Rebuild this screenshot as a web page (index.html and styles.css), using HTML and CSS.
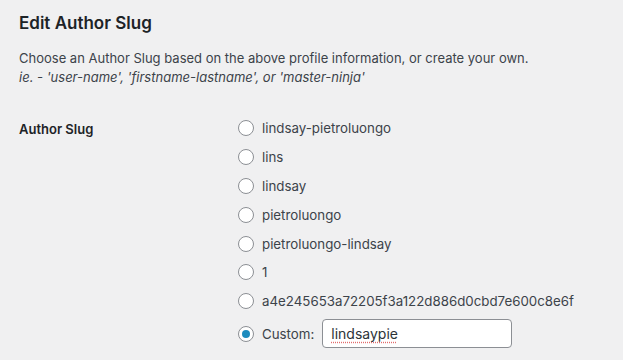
FILE: index.html
```html
<!DOCTYPE html>
<html lang="en">
<head>
<meta charset="utf-8">
<title>Edit Author Slug</title>
<link rel="stylesheet" href="styles.css">
</head>
<body>
<h2 class="title">Edit Author Slug</h2>
<p class="desc">Choose an Author Slug based on the above profile information, or create your own.<br><em>ie. - 'user-name', 'firstname-lastname', or 'master-ninja'</em></p>
<div class="field">
  <div class="field-label">Author Slug</div>
  <fieldset class="options">
    <label class="opt"><span class="radio"></span><span>lindsay-pietroluongo</span></label>
    <label class="opt"><span class="radio"></span><span>lins</span></label>
    <label class="opt"><span class="radio"></span><span>lindsay</span></label>
    <label class="opt"><span class="radio"></span><span>pietroluongo</span></label>
    <label class="opt"><span class="radio"></span><span>pietroluongo-lindsay</span></label>
    <label class="opt"><span class="radio"></span><span>1</span></label>
    <label class="opt"><span class="radio"></span><span>a4e245653a72205f3a122d886d0cbd7e600c8e6f</span></label>
    <label class="opt custom"><span class="radio checked"></span><span>Custom:</span><span class="textbox"><span class="typo">lindsaypie</span></span></label>
  </fieldset>
</div>
</body>
</html>
```
FILE: styles.css
```css
html, body {
  margin: 0;
  padding: 0;
  background: #f0f0f1;
}
body {
  padding: 0 19px;
  font-family: Inter, "Liberation Sans", sans-serif;
  font-size: 13px;
  color: #3c434a;
}
.title {
  margin: 12px 0 0;
  font-size: 17px;
  line-height: 22px;
  font-weight: 600;
  color: #1d2327;
}
.desc {
  margin: 15px 0 0;
  line-height: 19px;
  color: #3c434a;
}
.field {
  display: flex;
  margin-top: 27px;
}
.field-label {
  width: 219px;
  font-weight: 600;
  color: #1d2327;
  line-height: 20px;
  padding-top: 5px;
}
.options {
  border: 0;
  margin: 0;
  padding: 0;
  display: flex;
  flex-direction: column;
  font-size: 13.3px;
}
.opt {
  display: flex;
  align-items: center;
  gap: 8px;
  height: 28.8px;
}
.radio {
  width: 14px;
  height: 14px;
  border: 1px solid #8c8f94;
  border-radius: 50%;
  background: #fff;
  display: flex;
  align-items: center;
  justify-content: center;
  flex: none;
}
.radio.checked::before {
  content: "";
  width: 8px;
  height: 8px;
  border-radius: 50%;
  background: #1e8cbe;
}
.custom {
  height: 30px;
  margin-top: 3px;
  gap: 0;
}
.custom .radio {
  margin-right: 8px;
}
.textbox {
  box-sizing: border-box;
  width: 190px;
  height: 29px;
  margin-left: 8px;
  border: 1px solid #8c8f94;
  border-radius: 4px;
  background: #fff;
  padding: 0 8px;
  display: flex;
  align-items: center;
  color: #2c3338;
  font-size: 14px;
}
.typo {
  text-decoration: underline dotted #e26d6d;
  text-underline-offset: 3px;
}
```
